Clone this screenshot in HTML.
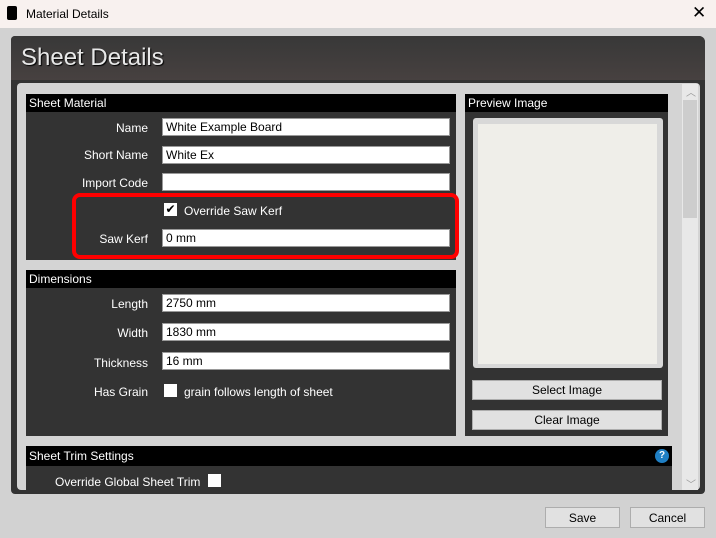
<!DOCTYPE html>
<html><head><meta charset="utf-8"><style>
*{box-sizing:border-box;margin:0;padding:0}
body{width:716px;height:538px;background:#d2d2d2;font-family:"Liberation Sans",sans-serif;font-size:12px;position:relative;overflow:hidden}
.a{position:absolute}
.tb{left:0;top:0;width:716px;height:28px;background:#f8f1ef}
.hd{background:#000;color:#fff;font-size:12px;line-height:19px;padding-left:3px}
.grp{background:#333}
.lbl{color:#fff;text-align:right;width:140px;left:8px}
.in{background:#fff;border:1px solid #999;height:18px;color:#000;padding-left:3px;line-height:16px;font-size:12px}
.cb{background:#fff;width:13px;height:13px}
.btn{background:#e1e1e1;border:1px solid #adadad;text-align:center;color:#000;line-height:19px}
</style></head><body>
<div class="a tb"></div>
<div class="a" style="left:7px;top:6px;width:10px;height:14px;background:#000;border-radius:2px"></div>
<div class="a" style="left:26px;top:7px;color:#000;font-size:12px">Material Details</div>
<div class="a" style="left:692px;top:3px;font-size:17px;color:#000">✕</div>
<div class="a" style="left:11px;top:36px;width:694px;height:458px;background:#333;border-radius:4px 6px 4px 4px"></div>
<div class="a" style="left:11px;top:36px;width:694px;height:44px;background:linear-gradient(#383838,#474140);border-radius:4px 6px 0 0"></div>
<div class="a" style="left:21px;top:44px;color:#e8e8e8;font-size:24px;text-shadow:1px 1px 1px #000">Sheet Details</div>
<div class="a" style="left:17px;top:83px;width:683px;height:407px;background:#d4d4d4;border-radius:4px"></div>
<div class="a" style="left:682px;top:84px;width:16px;height:406px;background:#e8e8e8"></div>
<div class="a" style="left:683px;top:100px;width:14px;height:118px;background:#cdcdcd"></div>
<div class="a" style="left:686px;top:84px;color:#999;font-size:10px">︿</div>
<div class="a" style="left:686px;top:476px;color:#999;font-size:10px">﹀</div>

<div class="a grp" style="left:26px;top:94px;width:430px;height:166px"></div>
<div class="a hd" style="left:26px;top:94px;width:430px;height:18px">Sheet Material</div>
<div class="a lbl" style="top:121px">Name</div><div class="a in" style="left:162px;top:118px;width:288px">White Example Board</div>
<div class="a lbl" style="top:148px">Short Name</div><div class="a in" style="left:162px;top:146px;width:288px">White Ex</div>
<div class="a lbl" style="top:176px">Import Code</div><div class="a in" style="left:162px;top:173px;width:288px"></div>
<div class="a cb" style="left:164px;top:203px;color:#000;font-size:12px;line-height:13px;text-align:center">✔</div>
<div class="a" style="left:184px;top:204px;color:#fff">Override Saw Kerf</div>
<div class="a lbl" style="top:232px">Saw Kerf</div><div class="a in" style="left:162px;top:229px;width:288px">0 mm</div>
<div class="a" style="left:72px;top:193px;width:387px;height:66px;border:4px solid #f00;border-radius:8px"></div>

<div class="a grp" style="left:26px;top:270px;width:430px;height:166px"></div>
<div class="a hd" style="left:26px;top:270px;width:430px;height:18px">Dimensions</div>
<div class="a lbl" style="top:297px">Length</div><div class="a in" style="left:162px;top:294px;width:288px">2750 mm</div>
<div class="a lbl" style="top:326px">Width</div><div class="a in" style="left:162px;top:323px;width:288px">1830 mm</div>
<div class="a lbl" style="top:356px">Thickness</div><div class="a in" style="left:162px;top:352px;width:288px">16 mm</div>
<div class="a lbl" style="top:385px">Has Grain</div><div class="a cb" style="left:164px;top:384px"></div>
<div class="a" style="left:184px;top:385px;color:#fff">grain follows length of sheet</div>

<div class="a grp" style="left:465px;top:94px;width:203px;height:342px"></div>
<div class="a hd" style="left:465px;top:94px;width:203px;height:18px">Preview Image</div>
<div class="a" style="left:473px;top:118px;width:190px;height:250px;background:#d8d8d8;border-radius:3px"></div>
<div class="a" style="left:478px;top:124px;width:179px;height:240px;background:#efeee9"></div>
<div class="a btn" style="left:472px;top:380px;width:190px;height:20px">Select Image</div>
<div class="a btn" style="left:472px;top:410px;width:190px;height:20px">Clear Image</div>

<div class="a grp" style="left:26px;top:446px;width:646px;height:44px"></div>
<div class="a hd" style="left:26px;top:446px;width:646px;height:20px;line-height:20px">Sheet Trim Settings</div>
<div class="a" style="left:655px;top:449px;width:14px;height:14px;border-radius:50%;background:#1f7fc4;color:#fff;font-size:10px;font-weight:bold;text-align:center;line-height:14px">?</div>
<div class="a" style="left:55px;top:475px;color:#fff">Override Global Sheet Trim</div>
<div class="a cb" style="left:208px;top:474px"></div>

<div class="a btn" style="left:545px;top:507px;width:75px;height:21px;line-height:20px">Save</div>
<div class="a btn" style="left:630px;top:507px;width:75px;height:21px;line-height:20px">Cancel</div>
</body></html>
